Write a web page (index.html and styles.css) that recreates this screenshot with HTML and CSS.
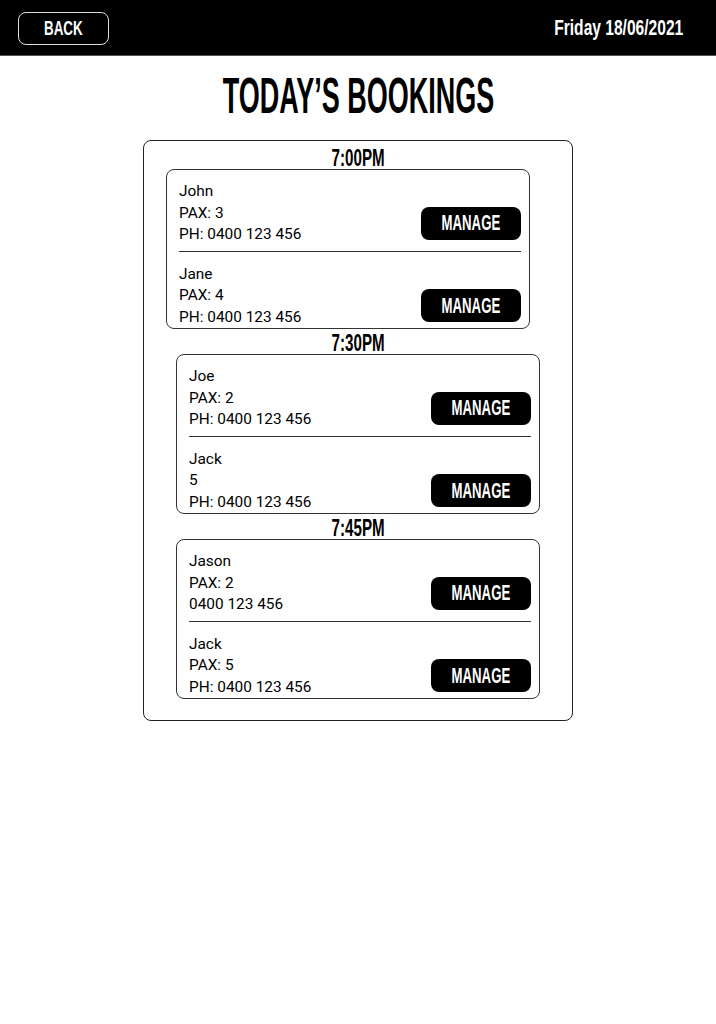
FILE: index.html
```html
<!DOCTYPE html>
<html>
	<head>
		<meta charset="utf-8" />
		<title>Today's Bookings</title>
		<link rel="stylesheet" href="styles.css">
	</head>
	<body>
		<div id="topBar">
			<a class="backBtn" href="#"><span class="cond sBack">BACK</span></a>
			<div class="today"><span class="cond sDate">Friday 18/06/2021</span></div>
		</div>

		<h1 class="pageTitle"><span class="cond sTitle">TODAY’S BOOKINGS</span></h1>

		<div id="bookings">

			<div class="slot">
				<div class="slotTime"><span class="cond sTime">7:00PM</span></div>
				<div class="group shift">
					<div class="entry">
						<div class="info">
							<div>John</div>
							<div>PAX: 3</div>
							<div>PH: 0400 123 456</div>
						</div>
						<a class="manage" href="#"><span class="cond sManage">MANAGE</span></a>
					</div>
					<div class="entry">
						<div class="info">
							<div>Jane</div>
							<div>PAX: 4</div>
							<div>PH: 0400 123 456</div>
						</div>
						<a class="manage" href="#"><span class="cond sManage">MANAGE</span></a>
					</div>
				</div>
			</div>

			<div class="slot">
				<div class="slotTime"><span class="cond sTime">7:30PM</span></div>
				<div class="group">
					<div class="entry">
						<div class="info">
							<div>Joe</div>
							<div>PAX: 2</div>
							<div>PH: 0400 123 456</div>
						</div>
						<a class="manage" href="#"><span class="cond sManage">MANAGE</span></a>
					</div>
					<div class="entry">
						<div class="info">
							<div>Jack</div>
							<div>5</div>
							<div>PH: 0400 123 456</div>
						</div>
						<a class="manage" href="#"><span class="cond sManage">MANAGE</span></a>
					</div>
				</div>
			</div>

			<div class="slot">
				<div class="slotTime"><span class="cond sTime">7:45PM</span></div>
				<div class="group">
					<div class="entry">
						<div class="info">
							<div>Jason</div>
							<div>PAX: 2</div>
							<div>0400 123 456</div>
						</div>
						<a class="manage" href="#"><span class="cond sManage">MANAGE</span></a>
					</div>
					<div class="entry">
						<div class="info">
							<div>Jack</div>
							<div>PAX: 5</div>
							<div>PH: 0400 123 456</div>
						</div>
						<a class="manage" href="#"><span class="cond sManage">MANAGE</span></a>
					</div>
				</div>
			</div>

		</div>
	</body>
</html>
```

FILE: styles.css
```css
body {
	margin: 0;
	background: #fff;
	color: #000;
	font-family: Roboto, "Liberation Sans", sans-serif;
}

/* condensed headline text */
.cond {
	display: inline-block;
	font-family: "Liberation Sans", Arial, sans-serif;
	font-weight: bold;
	white-space: nowrap;
	transform-origin: center;
}

.sTitle {
	transform: scaleX(0.54);
}

.sBack {
	transform: scaleX(0.64);
}

.sDate {
	transform: scaleX(0.708);
	transform-origin: right center;
}

.sTime {
	transform: scaleX(0.645);
}

.sManage {
	transform: scaleX(0.6);
}

#topBar {
	height: 56px;
	box-sizing: border-box;
	background: #000;
	border-bottom: 1px solid #555;
	display: flex;
	justify-content: space-between;
	align-items: center;
	padding: 1px 33px 0 18px;
}

.backBtn {
	width: 91px;
	height: 33px;
	box-sizing: border-box;
	border: 1.5px solid #ddd;
	border-radius: 8px;
	display: flex;
	align-items: center;
	justify-content: center;
	color: #fff;
	text-decoration: none;
	font-size: 21px;
}

.today {
	color: #fff;
	font-size: 22px;
}

.pageTitle {
	margin: 15px 0 19px;
	font-size: 50px;
	line-height: 50px;
	text-align: center;
	font-weight: normal;
}

#bookings {
	width: 430px;
	box-sizing: border-box;
	margin: 0 auto;
	border: 1px solid #222;
	border-radius: 8px;
	padding: 6px 0 21px;
}

.slot + .slot {
	margin-top: 3px;
}

.slotTime {
	text-align: center;
	font-size: 23.5px;
	line-height: 22px;
}

.group {
	width: 364px;
	box-sizing: border-box;
	margin: 0 auto;
	border: 1px solid #333;
	border-radius: 8px;
	padding: 0 8px 0 12px;
}

.group.shift {
	margin-left: 22px;
}

.entry {
	display: flex;
	justify-content: space-between;
	align-items: flex-end;
	padding: 11px 0 5px;
}

.entry + .entry {
	border-top: 1.5px solid #333;
	padding: 12px 0 0;
}

.info {
	font-size: 15.4px;
	line-height: 21.5px;
}

.manage {
	width: 100px;
	height: 33px;
	margin-bottom: 6px;
	background: #000;
	border-radius: 8px;
	display: flex;
	align-items: center;
	justify-content: center;
	color: #fff;
	text-decoration: none;
	font-size: 22px;
}
```
